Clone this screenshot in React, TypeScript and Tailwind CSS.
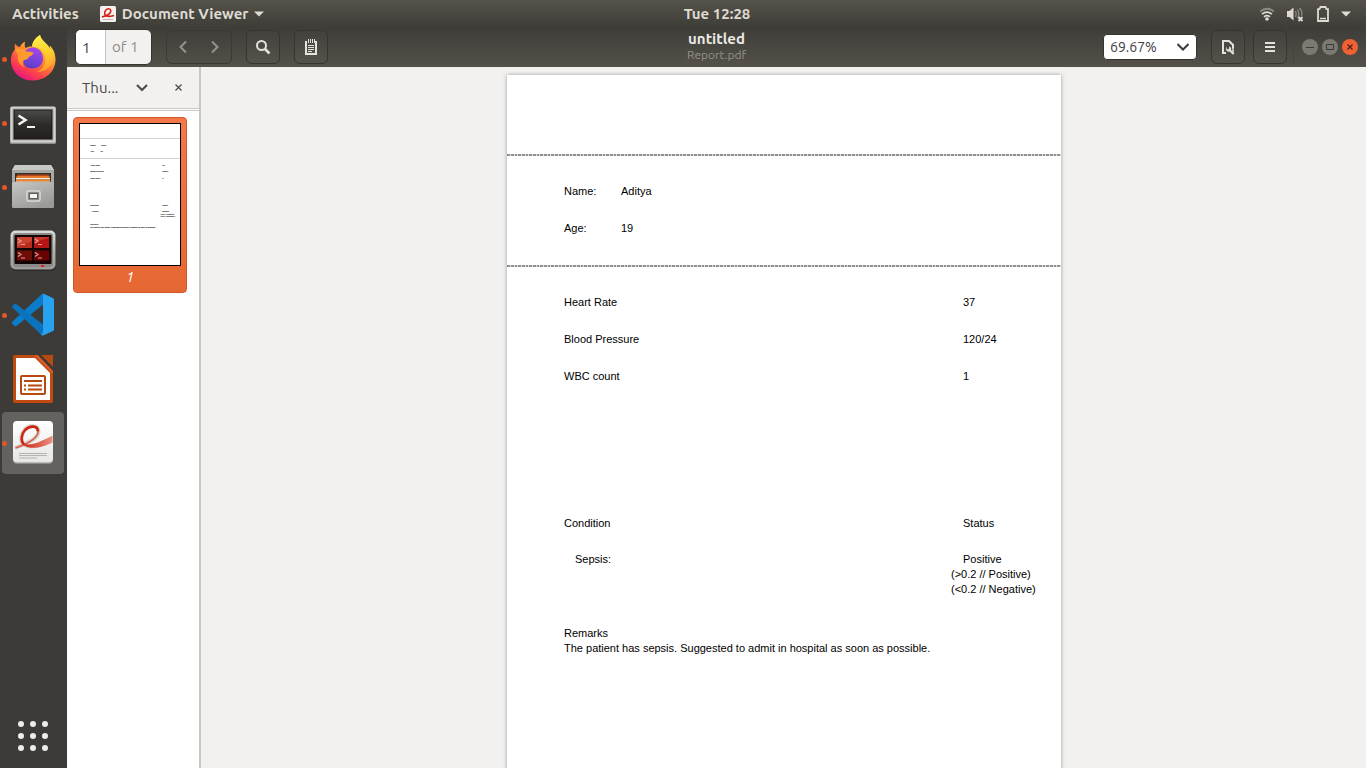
import type { ReactNode } from "react";

const PATIENT = [
  { label: "Name:", value: "Aditya" },
  { label: "Age:", value: "19" },
];

const METRICS = [
  { label: "Heart Rate", value: "37" },
  { label: "Blood Pressure", value: "120/24" },
  { label: "WBC count", value: "1" },
];

const REMARK = "The patient has sepsis. Suggested to admit in hospital as soon as possible.";

function FirefoxIcon() {
  return (
    <svg width="48" height="48" viewBox="0 0 48 48">
      <defs>
        <linearGradient id="ffBody" x1="0.85" y1="0.05" x2="0.3" y2="1">
          <stop offset="0" stopColor="#fff44f" />
          <stop offset="0.3" stopColor="#ffb52e" />
          <stop offset="0.55" stopColor="#ff7139" />
          <stop offset="0.8" stopColor="#fb3b50" />
          <stop offset="1" stopColor="#e31587" />
        </linearGradient>
        <linearGradient id="ffGlobe" x1="0.6" y1="0" x2="0.3" y2="1">
          <stop offset="0" stopColor="#a745e8" />
          <stop offset="0.6" stopColor="#7542d8" />
          <stop offset="1" stopColor="#5a3dc0" />
        </linearGradient>
        <linearGradient id="ffTail" x1="0.4" y1="0" x2="0.6" y2="1">
          <stop offset="0" stopColor="#fff04a" />
          <stop offset="0.5" stopColor="#ffd02e" />
          <stop offset="1" stopColor="#ff9a28" />
        </linearGradient>
      </defs>
      <path
        fill="url(#ffBody)"
        d="M6 8.500C5.500 10.500 5.500 12.500 5.800 14.500C2.500 18.500 1.500 23 2 27.500C3.200 38 12 45.500 23.500 45.500C36 45.500 46.500 37 46.500 24.500C46.500 18.500 44 13 40.500 10.500C41 12 41.200 13 41.200 14C38 7.500 32.500 6.500 31 0C26 3 23 7.500 23.300 11.500C20.500 11.200 18 12 16.500 13C15.500 11 15.500 9 16 6.500C13.500 8 11.800 10 10.800 12C8.500 11.500 7 10.500 6 8.500Z"
      />
      <path
        fill="url(#ffTail)"
        d="M31 0C26 3 23 7.500 23.300 11.500C31 12 36.500 17 36.500 24.500C36.500 30 33 35 28 37C39 36.500 45 29 44.500 21C44 17 42.500 15 41.200 14C38 7.500 32.500 6.500 31 0Z"
      />
      <path fill="url(#ffGlobe)" d="M16.500 16C19 12.800 23.500 12 27 13C31.500 14.500 34 18.500 34 23.500C34 29.500 29.500 33.500 23.500 33.500C18 33.500 14.500 30.500 14.500 26.500C14.500 23 17 22 16.500 16Z" />
      <path
        fill="#ff9a2e"
        d="M5.800 14.500C9 12.500 14 13 17 16.500C20 16.500 23.500 16.800 24.500 18C24 20.500 20.500 21 19.500 22.500C19 24 17.500 25 15 25C12.500 27 14 30.500 15.500 32C10 30 8 25 9 20Z"
      />
    </svg>
  );
}

function TerminalIcon() {
  return (
    <svg width="48" height="48" viewBox="0 0 48 48">
      <defs>
        <linearGradient id="termScreen" x1="0" y1="0" x2="0" y2="1">
          <stop offset="0" stopColor="#4a4a46" />
          <stop offset="0.5" stopColor="#2d2c29" />
          <stop offset="1" stopColor="#241f1e" />
        </linearGradient>
      </defs>
      <rect x="1" y="8" width="46" height="37" rx="1.500" fill="#8f8f8b" />
      <rect x="1.500" y="7.500" width="45" height="36" rx="1.500" fill="#d4d4d0" />
      <rect x="3" y="9" width="42" height="33" fill="#b9b9b5" />
      <rect x="4.500" y="10.500" width="39" height="30" fill="#151513" />
      <rect x="5.500" y="11.500" width="37" height="28" fill="url(#termScreen)" />
      <path d="M9.500 16.500L16.500 21L9.500 25.500" fill="none" stroke="#f2f2f0" strokeWidth="2.600" />
      <path d="M18 28H26" stroke="#f2f2f0" strokeWidth="2" />
    </svg>
  );
}

function FilesIcon() {
  return (
    <svg width="48" height="48" viewBox="0 0 48 48">
      <defs>
        <linearGradient id="filesFront" x1="0" y1="0" x2="0.6" y2="1">
          <stop offset="0" stopColor="#c6c6c2" />
          <stop offset="1" stopColor="#9b9b97" />
        </linearGradient>
      </defs>
      <path d="M6 2H42L45 7V43H3V7Z" fill="#a8a8a4" />
      <path d="M6 2H42L45 7H3Z" fill="#c9c9c5" />
      <rect x="6" y="10" width="36" height="11" fill="#33302b" />
      <rect x="8" y="11.500" width="32" height="2" fill="#b8481c" />
      <rect x="7.500" y="13" width="33" height="3" fill="#e87a2c" />
      <rect x="7" y="15" width="34" height="1.500" fill="#f7eee4" />
      <rect x="7" y="16.500" width="34" height="2.500" fill="#f08a35" />
      <path d="M3 20L7 18.500H41L45 20V43.500Q45 45 43.500 45H4.500Q3 45 3 43.500Z" fill="url(#filesFront)" />
      <rect x="18" y="28" width="13" height="10" rx="1.500" fill="#8b8b87" stroke="#dcdcd8" strokeWidth="1.500" />
      <rect x="20.500" y="30.500" width="8" height="5" fill="#f4f4f2" stroke="#5e5e5a" strokeWidth="1" />
    </svg>
  );
}

function TerminatorIcon() {
  return (
    <svg width="48" height="48" viewBox="0 0 48 48">
      <defs>
        <linearGradient id="terrFrame" x1="0" y1="0" x2="0" y2="1">
          <stop offset="0" stopColor="#dcdcda" />
          <stop offset="0.5" stopColor="#b3b3b0" />
          <stop offset="1" stopColor="#9a9a97" />
        </linearGradient>
      </defs>
      <rect x="2" y="6" width="45" height="38" rx="5" fill="#2b2a27" />
      <rect x="1.500" y="3.500" width="45" height="39" rx="5" fill="url(#terrFrame)" />
      <rect x="4" y="6" width="40" height="34" rx="3" fill="#8a8a87" />
      <rect x="5.500" y="8" width="37" height="29" rx="1" fill="#140404" />
      <rect x="8" y="10" width="15" height="11" fill="#b92c1f" />
      <rect x="25" y="10" width="15" height="11" fill="#b51414" />
      <rect x="8" y="23.500" width="15" height="10" fill="#6d0e08" />
      <rect x="25" y="23.500" width="15" height="10" fill="#680404" />
      <path d="M8 10H23V14L8 20ZM25 10H40V11L25 15Z" fill="#e0563f" opacity="0.500" />
      <path
        d="M9 12L12 14L9 16M12 17.500H16M26 12L29 14L26 16M29 17.500H33M9 25.500L12 27.500L9 29.500M12 31H16M26 25.500L29 27.500L26 29.500M29 31H33"
        fill="none"
        stroke="#e89a90"
        strokeWidth="1.200"
      />
      <rect x="32" y="38" width="3" height="2" fill="#e02020" />
    </svg>
  );
}

function CodeIcon() {
  return (
    <svg width="48" height="48" viewBox="0 0 48 48">
      <path
        d="M34 2.500V13.500L7.500 35Q6 35.500 5 34.500L3 32.500Q2.500 31.500 3.500 30.500L33 3Z"
        fill="#0b7cc9"
      />
      <path d="M3.500 16.500Q2.500 15.500 3.500 14.500L5.500 13Q6.500 12.500 7.500 13.200L34 33.500V44.500L31.500 43Z" fill="#0b72bd" />
      <path d="M34 2.500L44 7Q45 7.500 45 8.500V38.500Q45 39.500 44 40L34 44.500Q33 44.800 31.800 43.500L34 42Z" fill="#27a2ee" />
    </svg>
  );
}

function ImpressIcon() {
  return (
    <svg width="48" height="50" viewBox="0 0 48 50">
      <path d="M6 1H28L44 17V47Q44 49 42 49H6Q4 49 4 47V3Q4 1 6 1Z" fill="#c04a10" />
      <path d="M7 4H26L41 19V46H7Z" fill="#fff" />
      <path d="M25 1L44 20V17L29 1Z" fill="#dc5a2a" />
      <path d="M29 1L44 16V13L32 1Z" fill="#3c3b37" />
      <path d="M32 1H44V13Z" fill="#b8490f" />
      <rect x="12" y="22" width="24" height="18" rx="1" fill="none" stroke="#b8490f" strokeWidth="2" />
      <path d="M15 27H33M19 31.500H33M19 35.500H33M15 31.500H17M15 35.500H17" stroke="#b8490f" strokeWidth="1.800" />
    </svg>
  );
}

function EvinceIcon() {
  return (
    <svg width="48" height="48" viewBox="0 0 48 48">
      <defs>
        <linearGradient id="evPaper" x1="0" y1="0" x2="0" y2="1">
          <stop offset="0" stopColor="#ffffff" />
          <stop offset="1" stopColor="#e6e6e4" />
        </linearGradient>
        <linearGradient id="evSwoosh" x1="0" y1="0" x2="1" y2="0">
          <stop offset="0" stopColor="#cf2413" />
          <stop offset="1" stopColor="#e8917f" />
        </linearGradient>
      </defs>
      <rect x="4" y="4" width="40" height="41" rx="4" fill="#8d8d89" />
      <rect x="4" y="2" width="40" height="41.500" rx="4" fill="url(#evPaper)" />
      <path
        d="M6 29C16 25 30 20 29.500 12C29 6 21 5.500 16 10.500C11 16 11 24 16 26.500C20 28 25 27.500 29 26.500"
        fill="none"
        stroke="#d4d4d0"
        strokeWidth="4"
      />
      <path d="M6.500 29C18 25 29 19.500 29 12.500" fill="none" stroke="#e05a48" strokeWidth="1.600" />
      <path d="M29 12.500C29 6.500 21 6 16 11C12 15.500 11.500 22 15 25.500" fill="none" stroke="#cf2413" strokeWidth="2.600" />
      <path d="M13.500 23.500C16.500 27 25 25.500 32 22C37 20 40 18.500 43.500 16.500V23.500C38 26.500 30 29 23 28.800C18 28.500 14.500 27 13.500 23.500Z" fill="url(#evSwoosh)" />
      <path d="M10 34.500H38M10 36.500H38M10 39H28" stroke="#b4b4b0" strokeWidth="1" />
    </svg>
  );
}

interface DockItem {
  name: string;
  icon: ReactNode;
  running: boolean;
  active?: boolean;
}

const DOCK: DockItem[] = [
  { name: "Firefox", icon: <FirefoxIcon />, running: true },
  { name: "Terminal", icon: <TerminalIcon />, running: true },
  { name: "Files", icon: <FilesIcon />, running: true },
  { name: "Terminator", icon: <TerminatorIcon />, running: false },
  { name: "Code", icon: <CodeIcon />, running: true },
  { name: "Impress", icon: <ImpressIcon />, running: false },
  { name: "Documents", icon: <EvinceIcon />, running: true, active: true },
];

function TopBar() {
  return (
    <header className="flex h-[27px] shrink-0 items-center bg-gradient-to-b from-[#55524a] to-[#3e3d38] px-3 text-[15px] leading-[26px] font-bold text-[#dfdbd2]">
      <div className="flex flex-1 basis-[71px] items-center">
        <button type="button">Activities</button>
        <button type="button" className="ml-[21px] flex items-center">
          <svg width="16" height="16" viewBox="0 0 16 16">
            <rect x="0" y="0" width="16" height="16" rx="1.500" fill="#f4f2f0" />
            <path
              d="M2 11C6 10 11 8 10.800 4.500C10.500 2 6.500 2 5.200 5C4 8 5 10.300 8 10.300C11 10.500 12 10 14 9.500"
              fill="none"
              stroke="#d22215"
              strokeWidth="1.600"
            />
            <path d="M3 13.500H13" stroke="#c8b0ac" />
          </svg>
          <span className="ml-1.5">Document Viewer</span>
          <svg className="ml-1.5" width="10" height="6" viewBox="0 0 10 6">
            <path d="M0 0.500H10L5 5.500Z" fill="currentColor" />
          </svg>
        </button>
      </div>
      <time>Tue 12:28</time>
      <div className="flex flex-1 basis-0 items-center justify-end pr-[3px]">
        <svg width="16" height="16" viewBox="0 0 16 16" fill="none" stroke="currentColor" strokeWidth="1.700">
          <path d="M1.200 5.500Q8 0 14.800 5.500" opacity="0.450" />
          <path d="M3 8.200Q8 4 13 8.200" />
          <path d="M5 10.800Q8 8.300 11 10.800" />
          <circle cx="8" cy="13" r="1.800" fill="currentColor" stroke="none" />
        </svg>
        <svg className="ml-3" width="18" height="16" viewBox="0 0 18 16">
          <path d="M0 5H2.500L6.500 1.500V14.500L2.500 11H0Z" fill="currentColor" />
          <path d="M8.500 5Q10 8 8.500 11M10.500 3.500Q13 8 10.500 12.500M12.500 2Q16 6 14.500 10" fill="none" stroke="currentColor" opacity="0.450" strokeWidth="1.300" />
          <path d="M11.500 11L15.500 15M15.500 11L11.500 15" stroke="currentColor" strokeWidth="1.800" />
        </svg>
        <svg className="ml-3" width="12" height="16" viewBox="0 0 12 16">
          <path d="M4 2V1H8V2M1 3.200H2.500L3.500 1H8.500L9.500 3.200H11V15H1Z" fill="none" stroke="currentColor" strokeWidth="1.800" />
          <path d="M3 12.500H9" stroke="currentColor" strokeWidth="1.500" />
        </svg>
        <svg className="ml-3" width="10" height="6" viewBox="0 0 10 6">
          <path d="M0 0.500H10L5 5.500Z" fill="currentColor" />
        </svg>
      </div>
    </header>
  );
}

function Dock() {
  return (
    <nav className="flex w-[67px] shrink-0 flex-col bg-[#3c3b37]">
      <ul>
        {DOCK.map((item) => (
          <li key={item.name} className="flex h-16 items-center">
            <span className={item.running ? "z-10 ml-0.5 size-[5px] rounded-full bg-[#e4562a]" : "ml-0.5 size-[5px]"} />
            <button
              type="button"
              aria-label={item.name}
              className={
                item.active
                  ? "-ml-[5px] flex size-[62px] items-center justify-center rounded-sm bg-white/20"
                  : "-ml-[5px] flex size-[62px] items-center justify-center"
              }
            >
              {item.icon}
            </button>
          </li>
        ))}
      </ul>
      <button type="button" aria-label="Show Applications" className="mt-auto flex h-16 items-center pl-[17px]">
        <svg width="32" height="32" viewBox="0 0 32 32" fill="#ededec">
          {[4, 16, 28].map((y) => [4, 16, 28].map((x) => <circle key={`${x}-${y}`} cx={x} cy={y} r="3" />))}
        </svg>
      </button>
    </nav>
  );
}

function ToolButton({ label, children }: { label: string; children: ReactNode }) {
  return (
    <button
      type="button"
      aria-label={label}
      className="flex size-[34px] items-center justify-center rounded-md border border-[#36352f] bg-white/[0.02] text-[#e4e2dc]"
    >
      {children}
    </button>
  );
}

function HeaderBar() {
  return (
    <header className="flex h-10 shrink-0 items-center bg-gradient-to-b from-[#3e3d38] to-[#545149] px-2">
      <div className="flex flex-1 items-center">
        <div className="flex h-9 items-center overflow-hidden rounded-md border border-[#35342f] bg-[#f2f1f0] text-[15px]">
          <input
            aria-label="Page"
            defaultValue="1"
            className="h-full w-[29px] bg-white pl-1.5 text-[#3c3c3c] outline-none"
          />
          <span className="flex h-full w-[46px] items-center border-l border-[#c6c5c2] pl-1.5 text-[#8c8c89]">of 1</span>
        </div>
        <div className="ml-3.5 flex h-[34px] w-[66px] rounded-md border border-[#3a3933] text-[#96948d]">
          <button type="button" aria-label="Previous page" className="flex flex-1 items-center justify-center">
            <svg width="8" height="12" viewBox="0 0 8 12" fill="none" stroke="currentColor" strokeWidth="2">
              <path d="M7 0.500L1.500 6L7 11.500" />
            </svg>
          </button>
          <button type="button" aria-label="Next page" className="flex flex-1 items-center justify-center">
            <svg width="8" height="12" viewBox="0 0 8 12" fill="none" stroke="currentColor" strokeWidth="2">
              <path d="M1 0.500L6.500 6L1 11.500" />
            </svg>
          </button>
        </div>
        <div className="ml-3.5 flex gap-3.5">
          <ToolButton label="Find">
            <svg width="16" height="16" viewBox="0 0 16 16" fill="none" stroke="currentColor">
              <circle cx="6.500" cy="6.500" r="4.500" strokeWidth="2" />
              <path d="M10 10L14.500 14.500" strokeWidth="2.600" />
            </svg>
          </ToolButton>
          <ToolButton label="Annotate">
            <svg width="14" height="16" viewBox="0 0 14 16" fill="none" stroke="currentColor">
              <path d="M2 2V15H12V2" strokeWidth="2" />
              <path d="M4.500 0V4M6.500 0V4M8.500 0V4M10.500 0V4" />
              <path d="M4 6.500H10M4 8.500H10M4 10.500H10M4 12.500H8" />
            </svg>
          </ToolButton>
        </div>
      </div>
      <div className="text-center">
        <h1 className="text-[15px] leading-4 font-bold text-[#ebe9e4]">untitled</h1>
        <p className="text-xs leading-4 text-[#96938b]">Report.pdf</p>
      </div>
      <div className="flex flex-1 items-center justify-end">
        <div className="relative text-[#3c3c3c]">
          <select
            aria-label="Zoom"
            className="h-[26px] w-[94px] appearance-none rounded-sm border border-[#35342f] bg-white pl-1.5 text-sm outline-none"
          >
            <option>69.67%</option>
          </select>
          <svg className="pointer-events-none absolute top-2 right-2" width="12" height="10" viewBox="0 0 12 10" fill="none" stroke="currentColor" strokeWidth="2">
            <path d="M0.500 2L6 7.500L11.500 2" />
          </svg>
        </div>
        <div className="ml-3.5 flex gap-2">
          <ToolButton label="View options">
            <svg width="14" height="16" viewBox="0 0 14 16">
              <path d="M5 14H2V2H8L12 6V9" fill="none" stroke="currentColor" strokeWidth="2" />
              <path
                d="M5.500 7.500V9.500L7 10.500L8.200 9.300V7.200C10 7.800 10.600 9.500 10 11L13.500 14.200L12 15.800L8.500 12.600C6 13.200 3.800 10.500 5.500 7.500Z"
                fill="currentColor"
              />
              <path d="M12 5V13" stroke="currentColor" strokeWidth="1.500" />
            </svg>
          </ToolButton>
          <ToolButton label="Menu">
            <svg width="10" height="12" viewBox="0 0 10 12" stroke="currentColor" strokeWidth="2">
              <path d="M0 2H10M0 6H10M0 10H10" />
            </svg>
          </ToolButton>
        </div>
        <div className="ml-1.5 flex h-8 items-center gap-1 border-l border-[#45433d] pl-2">
          <button type="button" aria-label="Minimize" className="flex size-4 items-center justify-center rounded-full bg-[#7b7972] text-[#3c3b37]">
            <svg width="8" height="8" viewBox="0 0 8 8" stroke="currentColor">
              <path d="M0 4.500H8" />
            </svg>
          </button>
          <button type="button" aria-label="Maximize" className="flex size-4 items-center justify-center rounded-full bg-[#7b7972] text-[#3c3b37]">
            <svg width="8" height="8" viewBox="0 0 8 8" fill="none" stroke="currentColor">
              <path d="M0.500 1.500H7.500V6.500H0.500Z" />
            </svg>
          </button>
          <button type="button" aria-label="Close" className="flex size-4 items-center justify-center rounded-full bg-[#ef6134] text-[#4a2418]">
            <svg width="6" height="6" viewBox="0 0 6 6" stroke="currentColor" strokeWidth="1.300">
              <path d="M0.500 0.500L5.500 5.500M5.500 0.500L0.500 5.500" />
            </svg>
          </button>
        </div>
      </div>
    </header>
  );
}

// Small preview of the page for the sidebar
function PagePreview() {
  return (
    <svg className="block w-full" viewBox="0 0 554 781" fontSize="11" fontFamily="'Liberation Sans', Arial, sans-serif" aria-hidden="true">
      <path d="M0 80H554M0 191H554" stroke="#ccc" strokeWidth="5" />
      <g stroke="#000" strokeWidth="0.300">
        <text x="57" y="120">Name:</text>
        <text x="114" y="120">Aditya</text>
        <text x="57" y="157">Age:</text>
        <text x="114" y="157">19</text>
        {METRICS.map((row, i) => (
          <g key={row.label}>
            <text x="57" y={231 + i * 37}>{row.label}</text>
            <text x="456" y={231 + i * 37}>{row.value}</text>
          </g>
        ))}
        <text x="57" y="452">Condition</text>
        <text x="456" y="452">Status</text>
        <text x="68" y="488">Sepsis:</text>
        <text x="456" y="488">Positive</text>
        <text x="444" y="503">{"(>0.2 // Positive)"}</text>
        <text x="444" y="518">{"(<0.2 // Negative)"}</text>
        <text x="57" y="562">Remarks</text>
        <text x="57" y="577">{REMARK}</text>
      </g>
    </svg>
  );
}

function Sidebar() {
  return (
    <aside className="flex w-[134px] shrink-0 flex-col border-r-2 border-[#c9c7c4] bg-white">
      <div className="flex h-[42px] shrink-0 items-center border-b border-[#c9c7c4] bg-[#f2f1f0] pl-[15px] text-[#4a4a4a]">
        <div className="relative">
          <select aria-label="Side pane" className="block w-[68px] appearance-none bg-transparent text-[15px] leading-5 outline-none">
            <option>Thu...</option>
          </select>
          <svg className="pointer-events-none absolute top-[5px] right-0.5" width="12" height="10" viewBox="0 0 12 10" fill="none" stroke="currentColor" strokeWidth="2">
            <path d="M1 2L6 7L11 2" />
          </svg>
        </div>
        <button type="button" aria-label="Close side pane" className="ml-5 flex size-4 items-center justify-center">
          <svg width="7" height="7" viewBox="0 0 7 7" stroke="currentColor" strokeWidth="1.200">
            <path d="M0.500 0.500L6.500 6.500M6.500 0.500L0.500 6.500" />
          </svg>
        </button>
      </div>
      <div className="mt-px border-t border-[#c9c7c4] px-1.5 py-1.5">
        <button
          type="button"
          className="block w-[114px] rounded-[4px] border border-[#d4552a] bg-gradient-to-b from-[#f2784a] to-[#e56732] px-[5px] pt-[5px] pb-1"
        >
          <div className="border border-black bg-white">
            <PagePreview />
          </div>
          <span className="block text-center text-sm leading-[22px] text-white italic">1</span>
        </button>
      </div>
    </aside>
  );
}

function DashedRule() {
  return (
    <div className="flex h-[37px] items-center">
      <hr className="h-0.5 flex-1 border-0 bg-[repeating-linear-gradient(90deg,#909090_0_3px,#dedede_3px_4px,#909090_4px_7px,#dedede_7px_8px,#909090_8px_10px,#dedede_10px_11px)]" />
    </div>
  );
}

function Report() {
  return (
    <article className="h-[784px] w-[554px] shrink-0 bg-white pt-[61px] font-['Liberation_Sans',Arial,sans-serif] text-[11px] leading-[15px] text-black shadow-[0_0_4px_rgba(0,0,0,0.35)]">
      <DashedRule />
      <table className="ml-[57px]">
        <tbody>
          {PATIENT.map((row) => (
            <tr key={row.label} className="h-[37px]">
              <th className="w-[57px] p-0 text-left font-normal">{row.label}</th>
              <td className="p-0">{row.value}</td>
            </tr>
          ))}
        </tbody>
      </table>
      <DashedRule />
      <table className="ml-[57px]">
        <tbody>
          {METRICS.map((row) => (
            <tr key={row.label} className="h-[37px]">
              <th className="w-[399px] p-0 text-left font-normal">{row.label}</th>
              <td className="p-0">{row.value}</td>
            </tr>
          ))}
        </tbody>
      </table>
      <table className="mt-[110px] ml-[57px]">
        <thead>
          <tr className="h-[37px]">
            <th className="w-[399px] p-0 text-left font-normal">Condition</th>
            <th className="p-0 text-left font-normal">Status</th>
          </tr>
        </thead>
        <tbody>
          <tr className="align-top">
            <td className="p-0 pt-2.5 pl-[11px]">Sepsis:</td>
            <td className="p-0 pt-2.5">
              <p>Positive</p>
              <p className="-ml-3">{"(>0.2 // Positive)"}</p>
              <p className="-ml-3">{"(<0.2 // Negative)"}</p>
            </td>
          </tr>
        </tbody>
      </table>
      <div className="mt-[29px] ml-[57px]">
        <p>Remarks</p>
        <p>{REMARK}</p>
      </div>
    </article>
  );
}

export default function App() {
  return (
    <div className="flex h-screen flex-col overflow-hidden bg-[#f2f1f0] font-['Ubuntu','Noto_Sans',sans-serif]">
      <TopBar />
      <div className="flex min-h-0 flex-1">
        <Dock />
        <div className="flex min-w-0 flex-1 flex-col">
          <HeaderBar />
          <div className="flex min-h-0 flex-1">
            <Sidebar />
            <main className="flex min-w-0 flex-1 justify-center overflow-hidden pt-2 pl-px">
              <Report />
            </main>
          </div>
        </div>
      </div>
    </div>
  );
}
